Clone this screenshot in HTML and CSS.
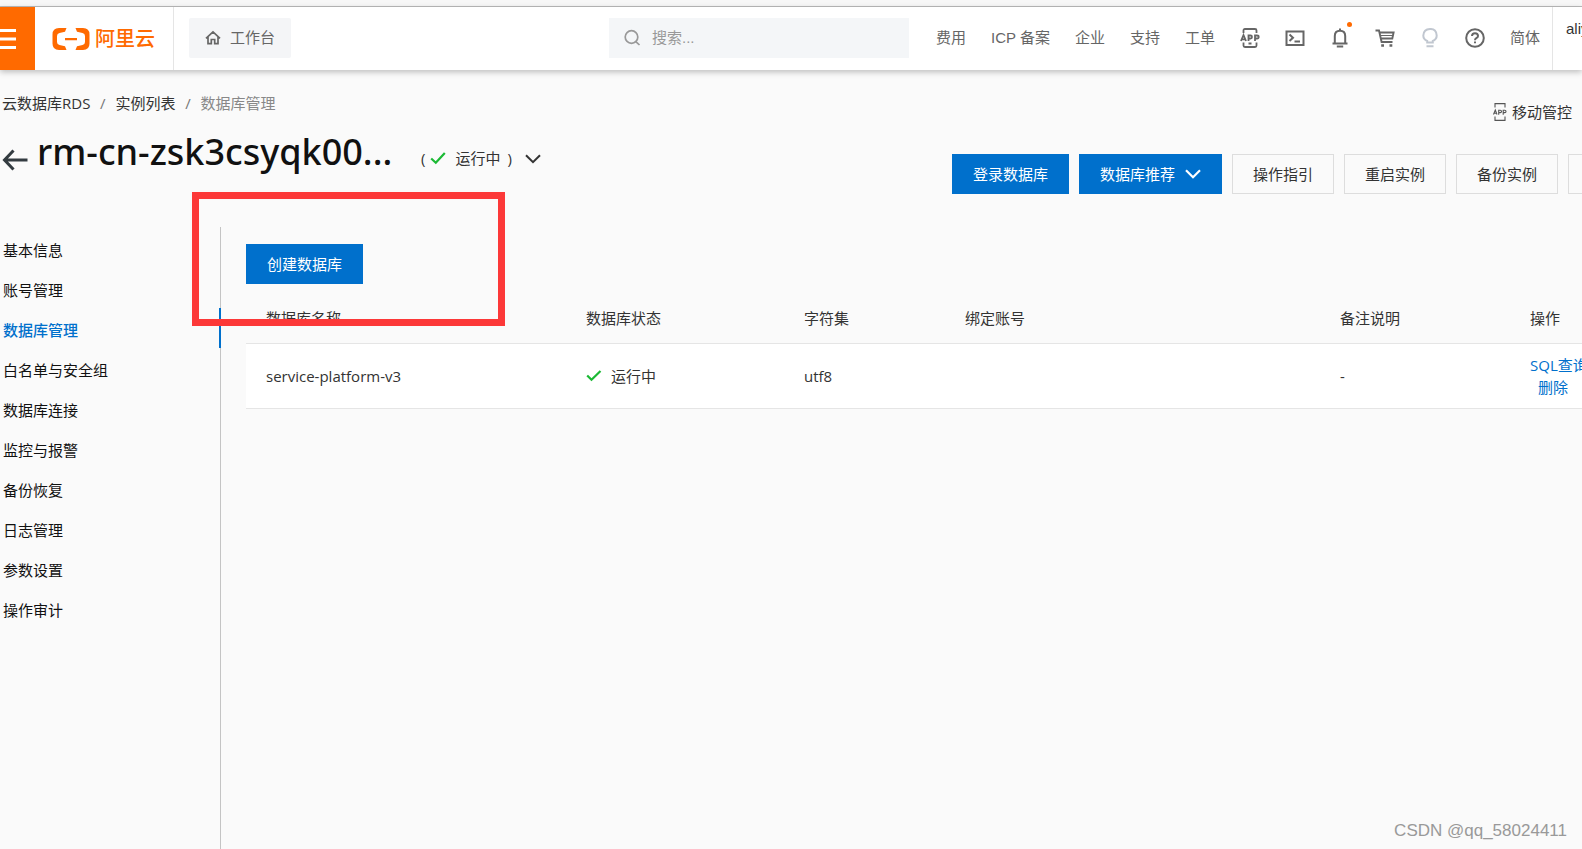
FILE: index.html
```html
<!DOCTYPE html>
<html lang="zh-CN">
<head>
<meta charset="utf-8">
<title>数据库管理</title>
<link rel="stylesheet" href="styles.css">
</head>
<body>
<div class="browser-edge"></div>
<header class="topbar">
  <button class="menu-btn" aria-label="菜单"><svg width="16" height="20" viewBox="0 0 16 20"><path d="M0 1.5h16M0 10h16M0 18.5h16" stroke="#fff" stroke-width="3"/></svg></button>
  <a class="brand" href="#">
    <svg width="38" height="22" viewBox="0 0 38 22" fill="#ff6a00"><path d="M14.5 0H7Q0.500 0 0.500 6.500V15.500Q0.500 22 7 22H14.500L13 18.300L7.500 17Q5 16.300 5 14V8Q5 5.700 7.500 5L13 3.700ZM23.500 0H31Q37.500 0 37.500 6.500V15.500Q37.500 22 31 22H23.500L25 18.300L30.500 17Q33 16.300 33 14V8Q33 5.700 30.500 5L25 3.700ZM13 10h12v2.200H13Z"/></svg>
    <span>阿里云</span>
  </a>
  <a class="workbench" href="#"><svg width="16" height="16" viewBox="0 0 16 16" fill="none" stroke="#666" stroke-width="1.700"><path d="M1 8.300L8 1.800L15 8.300M3 7V13.700H6.300V9.500H9.700V13.700H13V7"/></svg>工作台</a>
  <label class="search">
    <svg width="18" height="18" viewBox="0 0 18 18" fill="none" stroke="#999" stroke-width="1.700"><circle cx="7.500" cy="8" r="6.300"/><path d="M11.500 12.300L15.500 16"/></svg>
    <input type="text" placeholder="搜索..." aria-label="搜索">
  </label>
  <nav class="topnav">
    <a href="#">费用</a><a href="#">ICP 备案</a><a href="#">企业</a><a href="#">支持</a><a href="#">工单</a>
    <button aria-label="App"><svg width="20" height="20" viewBox="0 0 20 20" fill="none" stroke="#666" stroke-width="1.800"><path d="M3.500 5V2.500Q3.500 1 5 1H15Q16.500 1 16.500 2.500V5M3.500 14.500V17.500Q3.500 19 5 19H15Q16.500 19 16.500 17.500V14.500M8.500 15.500H11.500M1 13L3.500 7L6 13M2 11.300H5M8.500 13V7.500H10.500Q12 7.500 12 9T10.500 10.500H8.500M15 13V7.500H17Q18.700 7.500 18.700 9T17 10.500H15"/></svg></button>
    <button aria-label="终端"><svg width="20" height="20" viewBox="0 0 20 20" fill="none" stroke="#666" stroke-width="2"><path d="M1.500 3.500H18.500V17H1.500ZM4.500 6.500L8 9.700L4.500 13M9.500 13.500H15"/></svg></button>
    <button class="bell" aria-label="通知"><svg width="20" height="20" viewBox="0 0 20 20" fill="none" stroke="#666" stroke-width="2"><path d="M10 0.500V2.500M2.500 15.500H17.500M4.800 15.500V8Q4.800 2.700 10 2.700T15.200 8V15.500M6.800 18.600H13.200"/></svg></button>
    <button aria-label="购物车"><svg width="20" height="20" viewBox="0 0 20 20" fill="none" stroke="#666" stroke-width="1.900"><path d="M0.500 2.500H4L6.600 14H17.500M4.700 4.500H18.600L17.300 10.500H6"/><path d="M5.500 7.500H18" stroke-width="1"/><path d="M6.200 17.500H9M14.500 17.500H17.300" stroke-width="2.600"/></svg></button>
    <button aria-label="提示"><svg width="20" height="20" viewBox="0 0 20 20" fill="none" stroke="#c1c7d0" stroke-width="2"><path d="M7.200 14.500V13Q3.300 11.300 3.300 7.500Q3.600 1.300 10 1T16.700 7.500Q16.700 11.300 12.800 13V14.500ZM6.500 18.300H13.500"/></svg></button>
    <button aria-label="帮助"><svg width="20" height="20" viewBox="0 0 20 20" fill="none" stroke="#666" stroke-width="2"><circle cx="10" cy="10" r="8.800"/><path d="M7 8Q7 5.200 10 5.200T13 8Q13 9.300 11.300 10.200Q10 10.900 10 12.300M10 13.500V15.300"/></svg></button>
    <a href="#">简体</a>
  </nav>
  <a class="account" href="#">aliyun</a>
</header>

<div class="crumb-row">
  <nav class="crumbs" aria-label="面包屑"><a href="#">云数据库RDS</a><i>/</i><a href="#">实例列表</a><i>/</i><span>数据库管理</span></nav>
  <a class="mobile" href="#"><svg width="14" height="18" viewBox="0 0 14 18" fill="none" stroke="#555" stroke-width="1.100"><path d="M2 4.500V.6H12V4.500M2 13.500V17.400H12V13.500M0.500 11.500L2.300 7L4 11.500M1 10.200H3.600M5.700 11.700V7.300H7.300Q8.500 7.300 8.500 8.400T7.300 9.600H5.700M10.200 11.700V7.300H11.800Q13 7.300 13 8.400T11.800 9.600H10.200"/></svg>移动管控</a>
</div>

<div class="title-row">
  <button class="back" aria-label="返回"><svg width="26" height="22" viewBox="0 0 26 22" fill="none" stroke="#333b40" stroke-width="3"><path d="M11.500 1.500L2.500 11L11.500 20.500M2.500 11H25.500"/></svg></button>
  <h1>rm-cn-zsk3csyqk00...</h1>
  <div class="state"><span>(</span><svg width="16" height="14" viewBox="0 0 16 14" fill="none" stroke="#1bb934" stroke-width="2.200"><path d="M1.200 7.500L5.800 11.800L14.800 2"/></svg><span class="state-text">运行中</span><span>)</span></div>
  <button class="more" aria-label="展开"><svg width="16" height="10" viewBox="0 0 16 10" fill="none" stroke="#333" stroke-width="2"><path d="M1 1.200L8 8.200L15 1.200"/></svg></button>
  <div class="actions">
    <button class="btn primary">登录数据库</button>
    <button class="btn primary">数据库推荐<svg width="16" height="10" viewBox="0 0 16 10" fill="none" stroke="#fff" stroke-width="2.200"><path d="M1 1.200L8 8.200L15 1.200"/></svg></button>
    <button class="btn">操作指引</button>
    <button class="btn">重启实例</button>
    <button class="btn">备份实例</button>
    <button class="btn last" aria-label="更多"></button>
  </div>
</div>

<div class="body">
  <nav class="side">
    <a href="#">基本信息</a><a href="#">账号管理</a><a class="active" href="#">数据库管理</a><a href="#">白名单与安全组</a><a href="#">数据库连接</a><a href="#">监控与报警</a><a href="#">备份恢复</a><a href="#">日志管理</a><a href="#">参数设置</a><a href="#">操作审计</a>
  </nav>
  <main class="content">
    <button class="btn primary">创建数据库</button>
    <table>
      <colgroup><col class="c-name"><col class="c-status"><col class="c-charset"><col><col class="c-note"><col class="c-ops"></colgroup>
      <thead><tr><th>数据库名称</th><th>数据库状态</th><th>字符集</th><th>绑定账号</th><th>备注说明</th><th>操作</th></tr></thead>
      <tbody><tr>
        <td>service-platform-v3</td>
        <td><span class="running"><svg width="16" height="14" viewBox="0 0 16 14" fill="none" stroke="#1bb934" stroke-width="2.200"><path d="M1.200 6.500L5.500 10.800L14.500 2"/></svg>运行中</span></td>
        <td>utf8</td><td></td><td>-</td>
        <td><div class="ops"><a href="#">SQL查询</a><a class="del" href="#">删除</a></div></td>
      </tr></tbody>
    </table>
    <div class="highlight"></div>
  </main>
</div>
<div class="watermark">CSDN @qq_58024411</div>
</body>
</html>
```
FILE: styles.css
```css
* { box-sizing: border-box; }
html { height: 100%; }
body {
  margin: 0;
  min-height: 100%;
  display: flex;
  flex-direction: column;
  overflow: hidden;
  position: relative;
  background: #fafafa;
  color: #333;
  font: 15px/22px "Open Sans", "Noto Sans CJK SC", sans-serif;
}
a { color: inherit; text-decoration: none; white-space: nowrap; }
button { font: inherit; color: inherit; background: none; border: 0; padding: 0; }
svg { display: block; flex: none; }

.browser-edge { height: 7px; background: #f7f7f7; border-bottom: 1px solid #bbb; }
.topbar {
  display: flex;
  align-items: center;
  height: 63px;
  background: #fff;
  color: #666;
  font-family: "Liberation Sans", "Noto Sans CJK SC", sans-serif;
  box-shadow: 0 2px 6px rgba(0, 0, 0, .25);
}
.menu-btn { width: 35px; height: 100%; background: #ff6a00; }
.brand {
  display: flex;
  align-items: center;
  gap: 5px;
  width: 139px;
  height: 100%;
  padding-left: 17px;
  border-right: 1px solid #e5e5e5;
  color: #ff6a00;
  font-size: 20px;
  font-weight: 500;
}
.workbench {
  display: flex;
  align-items: center;
  gap: 9px;
  height: 40px;
  margin: 0 0 2px 15px;
  padding: 0 16px;
  background: #f4f5f7;
  border-radius: 2px;
}
.search {
  display: flex;
  align-items: center;
  gap: 10px;
  width: 300px;
  height: 40px;
  margin: 0 27px 2px auto;
  padding: 0 15px;
  background: #f4f6f8;
}
.search input { flex: 1; min-width: 0; border: 0; padding: 0; background: none; font: inherit; color: #333; outline: 0; }
.search input::placeholder { color: #999; }
.topnav { display: flex; align-items: center; gap: 25px; height: 100%; padding: 0 12px 2px 0; border-right: 1px solid #e5e5e5; }
.bell { position: relative; }
.bell::after { content: ""; position: absolute; top: -6px; right: -2px; width: 5px; height: 5px; border-radius: 50%; background: #ff6a00; }
.account { align-self: flex-start; width: 29px; margin-top: 11px; padding-left: 13px; overflow: hidden; color: #333; }

.crumb-row { display: flex; justify-content: space-between; margin-top: 22px; padding: 0 10px 0 2px; }
.crumbs { display: flex; }
.crumbs i { width: 25px; text-align: center; font-style: normal; color: #777; }
.crumbs span { color: #888; }
.mobile { display: flex; align-items: center; gap: 5px; margin-top: 9px; }

.title-row { display: flex; align-items: flex-start; padding-left: 2px; margin-top: 4px; }
.back { margin-top: 22px; }
h1 { margin: 0 0 0 9px; width: 384px; font: 500 36px/50px "Noto Sans", "Open Sans", sans-serif; color: #111; white-space: nowrap; }
.state { display: flex; align-items: center; margin-top: 20px; white-space: nowrap; }
.state svg { margin: 0 9px 0 5px; }
.state-text { margin-right: 7px; }
.more { margin: 27px 0 0 13px; }
.actions { display: flex; gap: 10px; margin: 27px -88px 0 auto; }
.btn {
  display: inline-flex;
  align-items: center;
  gap: 10px;
  height: 40px;
  padding: 0 20px;
  border: 1px solid #ddd;
  white-space: nowrap;
}
.btn.primary { padding: 0 21px; border: 0; background: #0070cc; color: #fff; }
.last { width: 102px; }

.body { display: flex; flex: 1; margin-top: 33px; }
.side { width: 221px; padding-top: 1px; border-right: 1px solid #c4c4c4; color: #111; }
.side a { display: block; height: 40px; padding-left: 3px; line-height: 44px; }
.side .active { margin-right: -1px; border-right: 2px solid #0070cc; color: #0070cc; font-weight: 500; }
.content { flex: 1; min-width: 0; position: relative; padding: 17px 0 0 25px; }
table { width: calc(100% + 60px); border-collapse: collapse; table-layout: fixed; margin-top: 9px; }
.c-name { width: 320px; }
.c-status { width: 218px; }
.c-charset { width: 161px; }
.c-note { width: 190px; }
.c-ops { width: 132px; }
th, td { padding: 0 20px; text-align: left; font-weight: 400; border-bottom: 1px solid #e5e5e5; }
th { height: 50px; }
td { height: 65px; background: #fff; }
.running { display: flex; align-items: center; gap: 9px; }
.ops { display: flex; flex-direction: column; color: #0070cc; }
.del { margin-left: 8px; }
.highlight { position: absolute; left: -29px; top: -35px; width: 313px; height: 134px; border: 7px solid #fc3838; pointer-events: none; }
.watermark { position: absolute; right: 15px; bottom: 7px; font: 17px/22px "Liberation Sans", sans-serif; color: #999; }
```
